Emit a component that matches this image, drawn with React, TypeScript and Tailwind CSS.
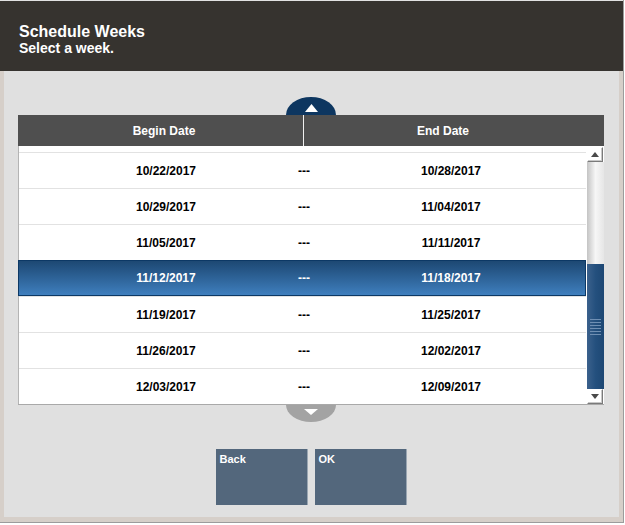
import React from "react"

const weeks = [
  ["10/22/2017", "10/28/2017"],
  ["10/29/2017", "11/04/2017"],
  ["11/05/2017", "11/11/2017"],
  ["11/12/2017", "11/18/2017"],
  ["11/19/2017", "11/25/2017"],
  ["11/26/2017", "12/02/2017"],
  ["12/03/2017", "12/09/2017"],
]

const selectedIndex = 3

function ScrollButton({ dir }: { dir: "up" | "down" }) {
  return (
    <div className="h-[15px] w-[16px] bg-white border border-t-white border-l-white border-r-[#7a7a7a] border-b-[#7a7a7a] shadow-[inset_-1px_-1px_0_#c8c8c8] flex items-center justify-center">
      <svg width="8" height="5" viewBox="0 0 8 5">
        {dir === "up" ? (
          <polygon points="4,0 8,5 0,5" fill="#4a4a4a" />
        ) : (
          <polygon points="0,0 8,0 4,5" fill="#4a4a4a" />
        )}
      </svg>
    </div>
  )
}

export default function App() {
  return (
    <div className="w-[625px] h-[525px] bg-white font-['Liberation_Sans',Arial,sans-serif]">
      <div className="w-[624px] h-[523px] flex flex-col border-r border-b border-[#9c9c9c]">
        <header className="h-[71px] bg-[#36332f] border-t border-[#e2e2e2] pl-[19px] pt-[22px] text-white font-bold">
          <div className="text-[16px] leading-[17px]">Schedule Weeks</div>
          <div className="text-[14px] leading-[16px]">Select a week.</div>
        </header>

        <main className="flex-1 bg-[#e0e0e0] border-l-4 border-r-4 border-b-[5px] border-[#d6cfc9] pl-[14px] pr-[15px] pt-[26px]">
          <div className="w-[586px]">
            {/* scroll up */}
            <div className="flex justify-center">
              <button className="w-[50px] h-[18px] bg-[#0d3660] rounded-t-[25px_18px] flex justify-center pt-[7px]">
                <svg width="13" height="8" viewBox="0 0 13 8">
                  <polygon points="6.5,0 13,8 0,8" fill="#ffffff" />
                </svg>
              </button>
            </div>

            {/* table */}
            <div className="bg-white border-b border-[#a9a9a9]">
              <div className="h-[31px] bg-[#4f4f4f] flex text-white font-bold text-[12px]">
                <div className="w-[285px] pl-[7px] flex items-center justify-center">Begin Date</div>
                <div className="w-px bg-[#f0f0f0]" />
                <div className="flex-1 pr-[22px] flex items-center justify-center">End Date</div>
              </div>
              <div className="flex h-[258px]">
                <div className="flex-1 border-l border-[#b4b4b4]">
                  <div className="h-[6px]" />
                  {weeks.map(([begin, end], i) => {
                    const selected = i === selectedIndex
                    return (
                      <div
                        key={begin}
                        className={
                          selected
                            ? "h-[36px] -ml-px border border-[#0c3865] bg-gradient-to-b from-[#1d4873] to-[#3f7fbe] text-white grid grid-cols-[176px_100px_194px] pl-[59px] items-center font-bold text-[12px]"
                            : "h-[36px] border-t border-[#e2e2e2] text-black grid grid-cols-[176px_100px_194px] pl-[59px] items-center font-bold text-[12px]"
                        }
                      >
                        <div className="text-center">{begin}</div>
                        <div className="text-center">---</div>
                        <div className="text-center">{end}</div>
                      </div>
                    )
                  })}
                </div>

                {/* scrollbar */}
                <div className="w-[18px] flex flex-col pt-px pl-px">
                  <ScrollButton dir="up" />
                  <div className="h-[102px] bg-gradient-to-r from-[#c4c4c4] via-[#f6f6f6] to-[#e6e6e6]" />
                  <div className="h-[125px] bg-gradient-to-r from-[#3b618c] via-[#24507e] to-[#1d4773] flex flex-col items-center justify-center gap-[2px]">
                    <div className="w-[11px] h-px bg-[#6f8fb3]" />
                    <div className="w-[11px] h-px bg-[#6f8fb3]" />
                    <div className="w-[11px] h-px bg-[#6f8fb3]" />
                    <div className="w-[11px] h-px bg-[#6f8fb3]" />
                    <div className="w-[11px] h-px bg-[#6f8fb3]" />
                    <div className="w-[11px] h-px bg-[#6f8fb3]" />
                  </div>
                  <ScrollButton dir="down" />
                </div>
              </div>
            </div>

            {/* scroll down */}
            <div className="flex justify-center">
              <button className="w-[50px] h-[17px] bg-[#a3a3a3] rounded-b-[25px_17px] flex justify-center pt-[4px]">
                <svg width="14" height="6" viewBox="0 0 14 6">
                  <polygon points="0,0 14,0 7,6" fill="#ffffff" />
                </svg>
              </button>
            </div>

            {/* actions */}
            <div className="flex justify-center gap-[7px] mt-[27px]">
              <button className="w-[92px] h-[56px] bg-[#53677c] border-r border-[#9aa6b2] text-white font-bold text-[11px] leading-[13px] text-left pl-[4px] pt-[4px] flex items-start">
                Back
              </button>
              <button className="w-[92px] h-[56px] bg-[#53677c] border-r border-[#9aa6b2] text-white font-bold text-[11px] leading-[13px] text-left pl-[4px] pt-[4px] flex items-start">
                OK
              </button>
            </div>
          </div>
        </main>
      </div>
    </div>
  )
}
